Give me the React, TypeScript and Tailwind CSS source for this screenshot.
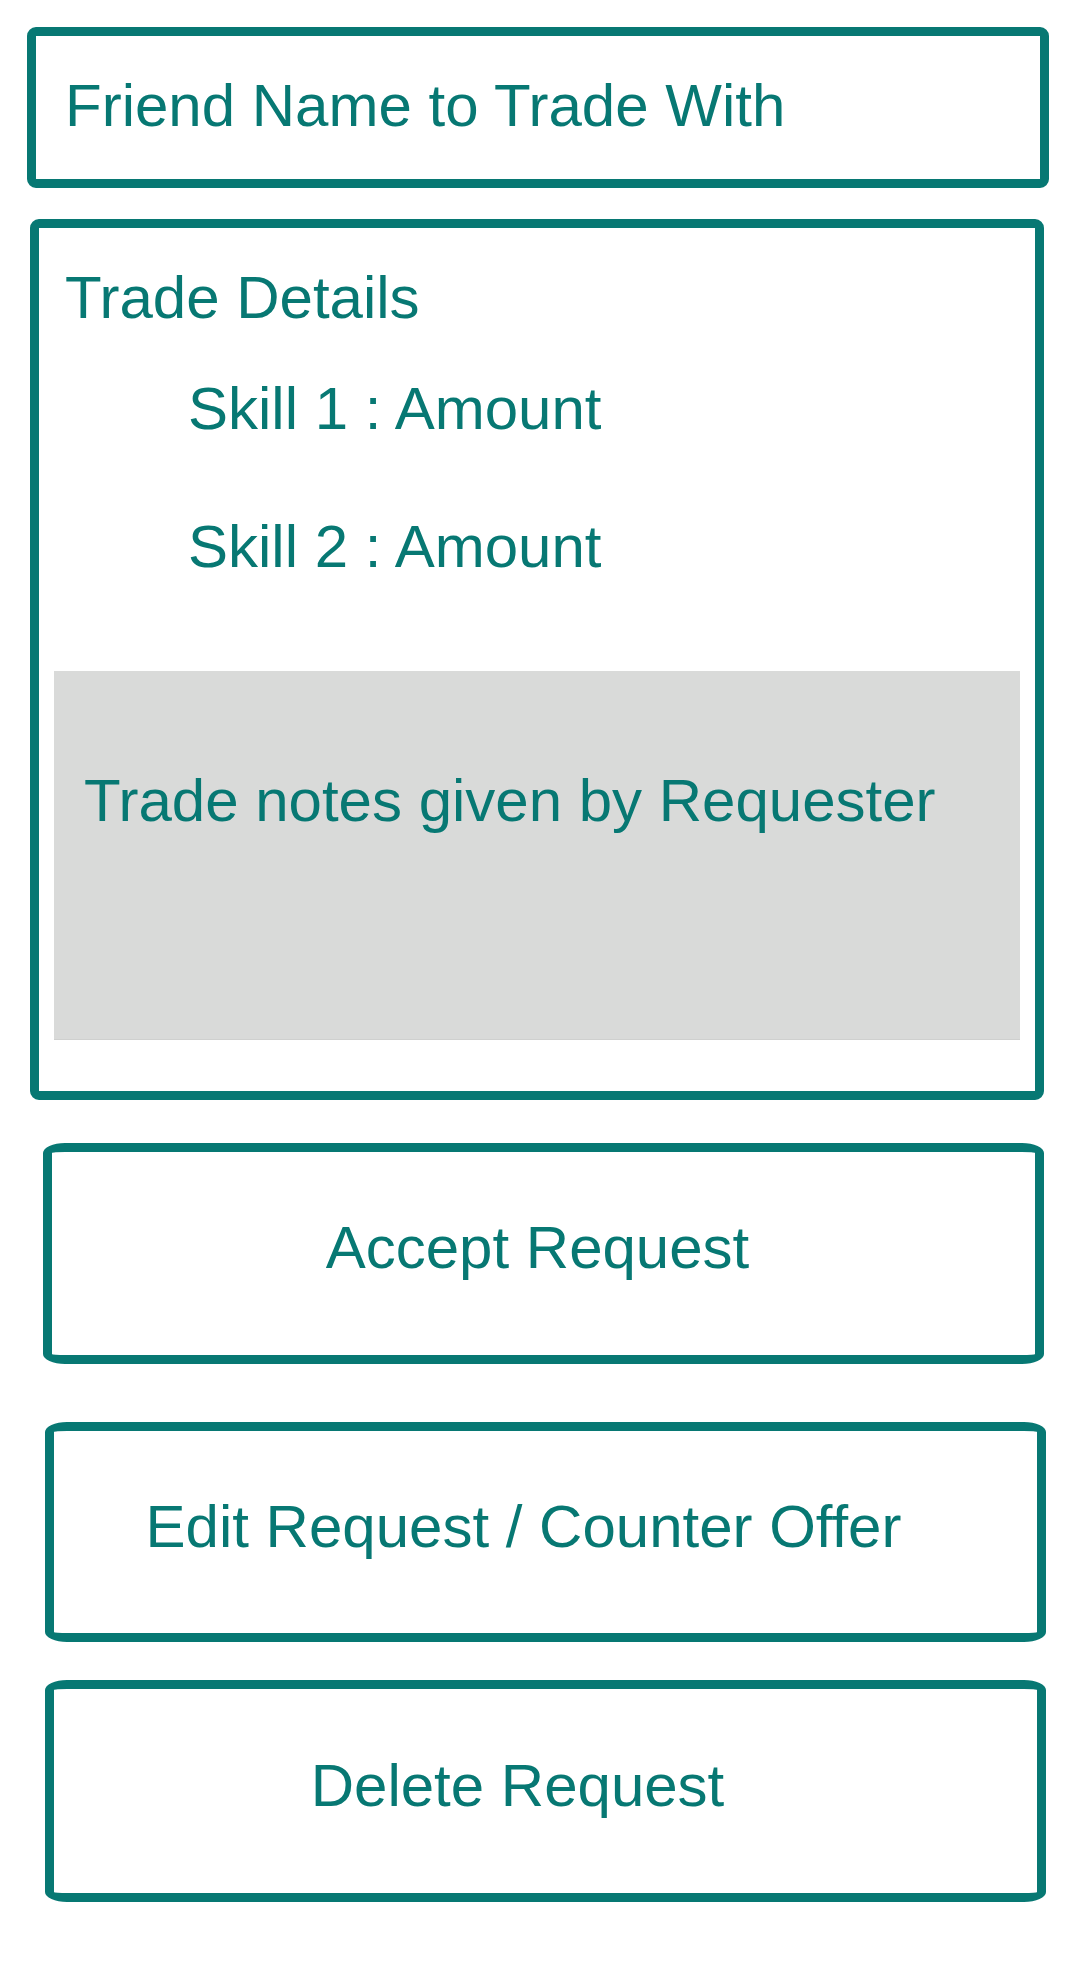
import React from "react";

const font = "font-['Liberation_Sans',Arial,sans-serif]";

function ActionButton({ label, box, text }: { label: string; box: string; text: string }) {
    return (
        <button
            type="button"
            className={`flex items-center justify-center border-[9px] border-[#077873] rounded-[22px/10px] bg-white ${box}`}
        >
            <span className={`text-[60px] leading-none text-[#077873] whitespace-nowrap ${text}`}>{label}</span>
        </button>
    );
}

export default function App() {
    const skills = ["Skill 1 : Amount", "Skill 2 : Amount"];

    return (
        <div className={`min-h-[1980px] w-[1080px] bg-white flex flex-col pt-[27px] ${font}`}>
            {/* friend name */}
            <div className="ml-[27px] w-[1022px] h-[161px] border-[9px] border-[#077873] rounded-[9px] pl-[29px] pt-[40px]">
                <div className="text-[60px] leading-none text-[#077873]">Friend Name to Trade With</div>
            </div>

            {/* trade details */}
            <div className="mt-[31px] ml-[30px] w-[1014px] h-[881px] border-[9px] border-[#077873] rounded-[9px] flex flex-col pt-[40px]">
                <div className="pl-[26px] text-[60px] leading-none text-[#077873]">Trade Details</div>
                <div className="pl-[149px] mt-[51px] flex flex-col gap-[78px]">
                    {skills.map((s) => (
                        <div key={s} className="text-[60px] leading-none text-[#077873]">
                            {s}
                        </div>
                    ))}
                </div>
                <div className="mt-[94px] mx-[15px] h-[369px] bg-[#d9dad9] border-b border-[#cfd0cf] pl-[30px] pt-[100px]">
                    <div className="text-[60px] leading-none text-[#077873]">Trade notes given by Requester</div>
                </div>
            </div>

            <ActionButton label="Accept Request" box="mt-[43px] ml-[43px] w-[1001px] h-[221px]" text="pr-[12px] pb-[11px]" />
            <ActionButton
                label="Edit Request / Counter Offer"
                box="mt-[58px] ml-[45px] w-[1001px] h-[220px]"
                text="pr-[44px] pb-[10px]"
            />
            <ActionButton label="Delete Request" box="mt-[38px] ml-[45px] w-[1001px] h-[222px]" text="pr-[56px] pb-[11px]" />
        </div>
    );
}
